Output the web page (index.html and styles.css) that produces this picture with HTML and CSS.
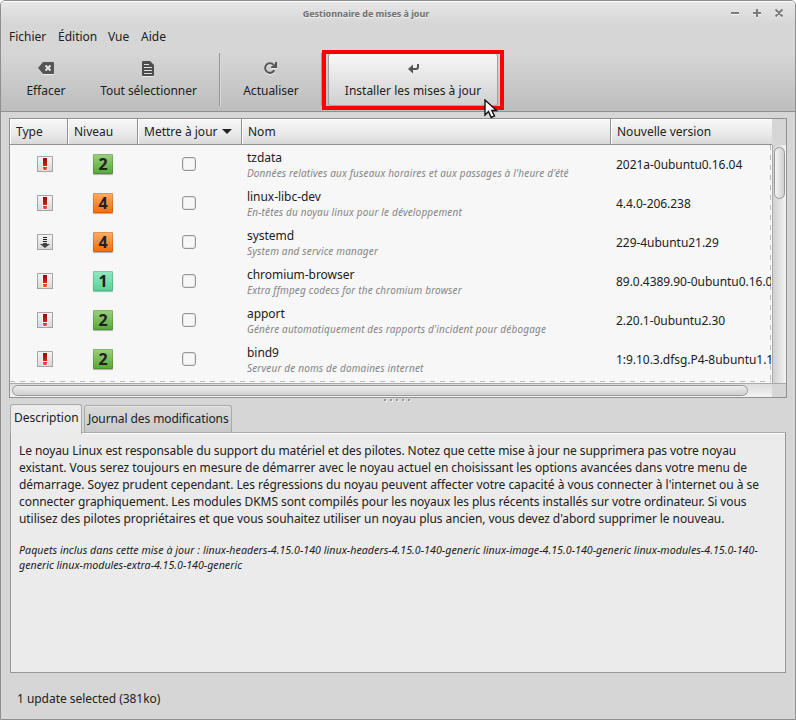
FILE: index.html
```
<!DOCTYPE html>
<html lang="fr">
<head>
<meta charset="utf-8">
<title>Gestionnaire de mises à jour</title>
<link rel="stylesheet" href="styles.css">
</head>
<body>
<svg class="defs" width="0" height="0" aria-hidden="true">
  <linearGradient id="red" x2="0" y2="1"><stop offset="0" stop-color="#940b0b"/><stop offset=".55" stop-color="#cc1b12"/><stop offset="1" stop-color="#f04a35"/></linearGradient>
  <symbol id="alert" viewBox="0 0 16 16"><path d="M5.500 1.500h5v8.500h-5zM5.500 10.500h5v4h-5z" fill="#fff"/><path d="M6 2h4v8H6zM6 11h4l-.4 3H6.400z" fill="url(#red)"/></symbol>
  <symbol id="down" viewBox="0 0 16 16"><path d="M6 3h4v1H6zM6 5h4v1H6zM6 7h4v1H6z" fill="#222"/><path d="M6 9h4v1h3l-5 4-5-4h3z" fill="#444"/></symbol>
</svg>
<div class="window">
  <header class="top">
    <div class="titlebar">
      <span class="title">Gestionnaire de mises à jour</span>
      <svg class="controls" width="54" height="12" viewBox="0 0 54 12"><g fill="none" stroke="#f4f4f4" stroke-width="2" transform="translate(0 1)"><path d="M1 6h8M23 6h8M27 2v8M45.500 2.500l7 7m0-7l-7 7"/></g><path d="M1 6h8M23 6h8M27 2v8M45.500 2.500l7 7m0-7l-7 7" fill="none" stroke="#7c7c7c" stroke-width="2"/></svg>
    </div>
    <nav class="menu"><span class="m1">Fichier</span><span class="m2">Édition</span><span class="m3">Vue</span><span class="m4">Aide</span></nav>
    <div class="toolbar">
      <div class="tool clear"><svg width="16" height="16" viewBox="0 0 16 16"><path d="M0 8l5-6h10q1 0 1 1v10q0 1-1 1H5z" fill="#555"/><path d="M7.500 5.500l5 5m0-5l-5 5" stroke="#e4e4e4" stroke-width="2"/></svg><span>Effacer</span></div>
      <div class="tool all"><svg width="16" height="16" viewBox="0 0 16 16"><path d="M2 2q0-1 1-1h7l4 4v10q0 1-1 1H3q-1 0-1-1z" fill="#4d4d4d"/><path d="M4 4.500h5M4 7.500h8M4 10.500h8M4 13.500h8" stroke="#dedede" stroke-width="1.200"/></svg><span>Tout sélectionner</span></div>
      <i class="sep"></i>
      <div class="tool refresh"><svg width="16" height="16" viewBox="0 0 16 16"><path d="M10.600 5A4.800 4.800 0 1 0 11.200 10.200" fill="none" stroke="#555" stroke-width="2"/><path d="M14 2v6H8V6.500L9.800 6 12 4V2z" fill="#555"/></svg><span>Actualiser</span></div>
      <i class="sep"></i>
      <div class="tool install"><svg width="16" height="16" viewBox="0 0 16 16"><path d="M13 4v3q0 2-2 2H6" fill="none" stroke="#555" stroke-width="2"/><path d="M3 9l5-4.500v9z" fill="#555"/></svg><span>Installer les mises à jour</span></div>
    </div>
    <div class="highlight"></div>
    <svg class="cursor" width="14" height="21" viewBox="0 0 14 21"><path d="M1 1v15l3.500-3.500 2.700 6 3.300-1.500-2.700-5.500h4.700z" fill="#fff" stroke="#111" stroke-width="1.400"/></svg>
  </header>

  <main class="body">
    <section class="list">
      <div class="grid head"><span>Type</span><span>Niveau</span><span>Mettre à jour<i class="arrow"></i></span><span>Nom</span><span>Nouvelle version</span><b class="corner"></b></div>
      <div class="view">
        <div class="rows">
          <div class="grid row"><svg class="type"><use href="#alert"/></svg><b class="level l2">2</b><i class="check"></i><div class="name"><span>tzdata</span><em>Données relatives aux fuseaux horaires et aux passages à l'heure d'été</em></div><span class="ver">2021a-0ubuntu0.16.04</span></div>
          <div class="grid row"><svg class="type"><use href="#alert"/></svg><b class="level l4">4</b><i class="check"></i><div class="name"><span>linux-libc-dev</span><em>En-têtes du noyau linux pour le développement</em></div><span class="ver">4.4.0-206.238</span></div>
          <div class="grid row"><svg class="type"><use href="#down"/></svg><b class="level l4">4</b><i class="check"></i><div class="name"><span>systemd</span><em>System and service manager</em></div><span class="ver">229-4ubuntu21.29</span></div>
          <div class="grid row"><svg class="type"><use href="#alert"/></svg><b class="level l1">1</b><i class="check"></i><div class="name"><span>chromium-browser</span><em>Extra ffmpeg codecs for the chromium browser</em></div><span class="ver">89.0.4389.90-0ubuntu0.16.04</span></div>
          <div class="grid row"><svg class="type"><use href="#alert"/></svg><b class="level l2">2</b><i class="check"></i><div class="name"><span>apport</span><em>Génère automatiquement des rapports d'incident pour débogage</em></div><span class="ver">2.20.1-0ubuntu2.30</span></div>
          <div class="grid row"><svg class="type"><use href="#alert"/></svg><b class="level l2">2</b><i class="check"></i><div class="name"><span>bind9</span><em>Serveur de noms de domaines internet</em></div><span class="ver">1:9.10.3.dfsg.P4-8ubuntu1.18</span></div>
        </div>
        <div class="vbar"><i></i></div>
      </div>
      <div class="hbar"><i></i></div>
    </section>
    <div class="grip"><i></i><i></i><i></i><i></i><i></i></div>
    <div class="tabs"><span class="tab active">Description</span><span class="tab">Journal des modifications</span></div>
    <section class="panel">
      <p><span class="d1">Le noyau Linux est responsable du support du matériel et des pilotes. Notez que cette mise à jour ne supprimera pas votre noyau</span><br><span class="d2">existant. Vous serez toujours en mesure de démarrer avec le noyau actuel en choisissant les options avancées dans votre menu de</span><br><span class="d3">démarrage. Soyez prudent cependant. Les régressions du noyau peuvent affecter votre capacité à vous connecter à l'internet ou à se</span><br><span class="d4">connecter graphiquement. Les modules DKMS sont compilés pour les noyaux les plus récents installés sur votre ordinateur. Si vous</span><br><span class="d5">utilisez des pilotes propriétaires et que vous souhaitez utiliser un noyau plus ancien, vous devez d'abord supprimer le nouveau.</span></p>
      <p class="packages"><span class="p1">Paquets inclus dans cette mise à jour : linux-headers-4.15.0-140 linux-headers-4.15.0-140-generic linux-image-4.15.0-140-generic linux-modules-4.15.0-140-</span><br><span class="p2">generic linux-modules-extra-4.15.0-140-generic</span></p>
    </section>
    <footer>1 update selected (381ko)</footer>
  </main>
</div>
</body>
</html>
```
FILE: styles.css
```
* { box-sizing: border-box; }
body { margin: 0; background: #fff; font: 12px/17px "Noto Sans", sans-serif; color: #212121; }
.defs { position: absolute; }
.window { width: 796px; height: 720px; padding: 0 2px; border: 1px solid #8f8f8f; border-radius: 5px 5px 0 0; background: #d6d6d6; overflow: hidden; }
.top { position: relative; height: 111px; margin: 0 -2px; padding: 0 2px; background: linear-gradient(#fff 0 1px, #e7e7e7 1px, #d6d6d6 23px, #d6d6d6 52px, #bdbdbd 110px, #909090 110px); }
.titlebar { height: 25px; display: flex; justify-content: flex-end; align-items: flex-start; padding: 6px 9px 0 0; }
.title { flex: 1; padding-right: 1px; text-align: center; font-size: 9px; line-height: 13px; font-weight: 700; letter-spacing: -.04px; color: #707070; text-shadow: 0 1px #f0f0f0; }
.menu { display: flex; height: 23px; padding: 2px 6px; white-space: nowrap; }
.m1 { width: 49px; } .m2 { width: 50px; } .m3 { width: 33px; }
.toolbar { display: flex; align-items: flex-start; padding-top: 4px; }
.tool { height: 53px; padding-top: 7px; display: flex; flex-direction: column; align-items: center; gap: 6px; white-space: nowrap; }
.tool svg { filter: drop-shadow(0 1px 0 #eee); }
.clear { width: 86px; } .all { width: 118px; margin-right: 12px; } .refresh { width: 100px; }
.all span { padding-left: 1px; letter-spacing: -.04px; }
.install { width: 170px; margin-left: 5px; padding-top: 6px; border: 1px solid #a0a0a0; border-radius: 3px; background: linear-gradient(#f8f8f8, #d0d0d0); }
.sep { width: 2px; height: 53px; border-left: 1px solid #999; border-right: 1px solid #d6d6d6; }
.highlight { position: absolute; left: 321px; top: 49px; width: 182px; height: 60px; border: 4px solid #f00; }
.cursor { position: absolute; left: 483px; top: 98px; z-index: 2; }
.body { padding: 6px 6px 0; }
.list { width: 778px; height: 280px; border: 1px solid #919191; background: #f7f7f7; }
.grid { display: grid; grid-template-columns: 58px 70px 104px 369px 161px 14px; }
.head { height: 26px; border-bottom: 1px solid #919191; background: linear-gradient(#f8f8f8, #e9e9e9 60%, #d9d9d9); }
.head span { padding: 4px 0 0 6px; border-right: 1px solid #919191; box-shadow: inset 1px 1px #fff; white-space: nowrap; }
.head span:nth-child(5) { border-right: 0; }
.corner { background: #d6d6d6; margin-bottom: -1px; }
.arrow { display: inline-block; margin-left: 4px; vertical-align: 2px; border: 5px solid transparent; border-top-color: #222; border-bottom: 0; }
.view { display: flex; height: 238px; }
.rows { width: 761px; height: 237px; overflow: hidden; background: repeating-linear-gradient(90deg, #bbb 0 5px, transparent 5px 10px) left bottom/100% 1px no-repeat, repeating-linear-gradient(#bbb 0 5px, transparent 5px 10px) right top/1px 100% no-repeat; }
.row { height: 39px; align-items: center; }
.type { width: 16px; height: 16px; margin: 0 0 2px 27px; box-shadow: inset 0 0 0 1px #a5a5a5, inset 0 -1px #777; border-radius: 1px; background: linear-gradient(#f6f6f6, #d6d6d6); }
.level { width: 20px; height: 20px; margin: 0 0 2px 25px; border-radius: 1px; text-align: center; font-size: 16px; line-height: 20px; box-shadow: inset 0 0 0 1px rgba(0,0,0,.13), 0 1px 1px rgba(0,0,0,.3); }
.l1 { background: linear-gradient(#92e8bd, #5bd196); } .l2 { background: linear-gradient(#9bd17c, #56a83a); } .l4 { background: linear-gradient(#ffad65, #f46c0b); }
.check { width: 14px; height: 14px; margin: 0 0 2px 44px; border: 1px solid #969696; border-radius: 3px; background: #f7f7f7; box-shadow: inset 0 0 0 1px #e6e6e6; }
.name { padding-left: 5px; white-space: nowrap; }
.name span { display: block; line-height: 17px; letter-spacing: -.04px; }
.name em { display: block; font-size: 10px; line-height: 14px; letter-spacing: .16px; color: #858585; }
.ver { padding-left: 5px; white-space: nowrap; letter-spacing: -.04px; }
.vbar { width: 15px; padding: 2px 0 0 2px; border-left: 1px solid transparent; background: linear-gradient(90deg, #f7f7f7 0 1px, #aaa 1px 2px, #d0d0d0 2px, #f3f3f3) border-box; }
.vbar i { display: block; width: 11px; height: 52px; border: 1px solid #999; border-radius: 6px; background: linear-gradient(90deg, #f3f3f3, #d0d0d0); }
.hbar { height: 14px; padding: 1px 2px; border-top: 1px solid #aaa; background: linear-gradient(#dcdcdc, #f3f3f3); box-shadow: inset -14px 0 #d6d6d6; }
.hbar i { display: block; width: 736px; height: 11px; border: 1px solid #999; border-radius: 6px; background: linear-gradient(#ececec, #d0d0d0); }
.grip { height: 6px; display: flex; justify-content: center; gap: 4px; padding: 1px 2px 0 0; }
.grip i { width: 2px; height: 2px; background: #999; box-shadow: 1px 1px #eee; }
.tabs { height: 28px; display: flex; align-items: flex-end; gap: 2px; padding-left: 1px; white-space: nowrap; }
.tab { height: 27px; border: 1px solid #a9a9a9; border-bottom: 0; border-radius: 3px 3px 0 0; padding: 4px 3px; background: linear-gradient(#dadada, #c9c9c9); box-shadow: inset 0 1px #e8e8e8; width: 148px; letter-spacing: -.09px; }
.tab.active { z-index: 1; width: 72px; height: 30px; margin-bottom: -2px; padding: 4px 3px; background: #ececec; position: relative; letter-spacing: 0; }
.panel { height: 241px; margin-left: 1px; border: 1px solid #999; border-top-color: #aaa; background: #ebebeb; box-shadow: inset 0 1px #fff; padding: 9px 8px; white-space: nowrap; width: 776px; }
.d1 { letter-spacing: -.085px; } .d2 { letter-spacing: -.04px; } .d3 { letter-spacing: -.05px; } .d4 { letter-spacing: -.063px; } .d5 { letter-spacing: -.07px; }
p { margin: 0; }
.packages { margin-top: 16px; font-size: 10.670px; line-height: 15px; font-style: italic; }
.p1 { letter-spacing: .027px; }
footer { padding: 17px 8px; letter-spacing: -.04px; }
```
